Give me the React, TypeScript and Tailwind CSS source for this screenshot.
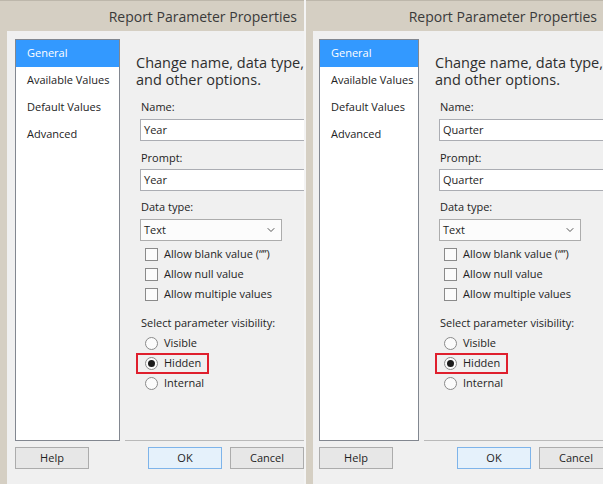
import { ChevronDown } from 'lucide-react';

type DialogProps = {
  value: string;
  width: string;
  listMargin: string;
  listWidth: string;
  okMargin: string;
  titlePad: string;
};

const NAV = ['General', 'Available Values', 'Default Values', 'Advanced'];

function Checkbox({ label }: { label: string }) {
  return (
    <div className="flex h-[20px] items-center pl-[20px]">
      <span className="h-[13px] w-[13px] shrink-0 border border-[#8a8a8a] bg-[#fbfbfb]" />
      <span className="ml-[6px]">{label}</span>
    </div>
  );
}

function Radio({ label, checked, marked }: { label: string; checked?: boolean; marked?: boolean }) {
  return (
    <div className="relative flex h-[20px] items-center pl-[20px]">
      {marked && <div className="absolute left-[11px] top-0 h-[21px] w-[73px] border-2 border-[#df1f2d]" />}
      <span className="flex h-[13px] w-[13px] shrink-0 items-center justify-center rounded-full border border-[#8a8a8a] bg-[#fbfbfb]">
        {checked && <span className="h-[7px] w-[7px] rounded-full bg-[#1a1a1a]" />}
      </span>
      <span className="ml-[6px]">{label}</span>
    </div>
  );
}

function TextBox({ value }: { value: string }) {
  return (
    <div className="ml-[15px] flex h-[22px] items-center border border-r-0 border-[#abadb3] bg-white pl-[3px]">
      {value}
    </div>
  );
}

function Dialog({ value, width, listMargin, listWidth, okMargin, titlePad }: DialogProps) {
  return (
    <div className={`flex h-[484px] flex-col bg-[#d5cfc3] ${width}`}>
      <div className={`flex h-[31px] items-center justify-end border-t border-[#bdb7ab] text-[14px] text-[#3a3a3a] ${titlePad}`}>
        Report Parameter Properties
      </div>
      <div className="ml-[7px] flex flex-1 flex-col bg-[#f0f0f0] pt-[8px]">
        <div className="flex h-[402px]">
          <div className={`flex shrink-0 flex-col border border-[#828790] bg-white ${listMargin} ${listWidth}`}>
            {NAV.map((item, i) => (
              <div
                key={item}
                className={`flex h-[27px] items-center pl-[11px] ${i === 0 ? 'bg-[#3399ff] text-white' : 'text-[#222]'}`}
              >
                {item}
              </div>
            ))}
          </div>
          <div className="ml-[5px] flex min-w-0 flex-1 flex-col border-b border-[#b9b9b9]">
            <div className="ml-[11px] mt-[15px] flex flex-col text-[14.5px] leading-[17px] text-[#2e2e2e]">
              <div className="h-[17px]">Change name, data type,</div>
              <div className="h-[17px]">and other options.</div>
            </div>
            <div className="ml-[16px] mt-[11px] leading-[16px]">Name:</div>
            <div className="mt-[4px]">
              <TextBox value={value} />
            </div>
            <div className="ml-[16px] mt-[9px] leading-[16px]">Prompt:</div>
            <div className="mt-[3px]">
              <TextBox value={value} />
            </div>
            <div className="ml-[16px] mt-[8px] leading-[16px]">Data type:</div>
            <div className="ml-[15px] mt-[4px] flex h-[22px] w-[142px] items-center justify-between border border-[#acacac] bg-[#fcfcfc] pl-[3px] pr-[4px]">
              <span>Text</span>
              <ChevronDown size={12} strokeWidth={2} className="text-[#555]" />
            </div>
            <div className="mt-[3px] flex flex-col">
              <Checkbox label={'Allow blank value (“”)'} />
              <Checkbox label="Allow null value" />
              <Checkbox label="Allow multiple values" />
            </div>
            <div className="ml-[16px] mt-[11px] leading-[16px]">Select parameter visibility:</div>
            <div className="mt-[2px] flex flex-col">
              <Radio label="Visible" />
              <Radio label="Hidden" checked marked />
              <Radio label="Internal" />
            </div>
          </div>
        </div>
        <div className="mt-[6px] flex h-[22px]">
          <button className={`h-[22px] w-[74px] shrink-0 border border-[#acacac] bg-[#e7e7e7] ${listMargin}`}>Help</button>
          <button className={`h-[22px] w-[74px] shrink-0 border border-[#7eb4ea] bg-[#e5f1fb] ${okMargin}`}>OK</button>
          <button className="ml-[8px] h-[22px] w-[74px] shrink-0 border border-[#acacac] bg-[#e7e7e7]">Cancel</button>
        </div>
      </div>
    </div>
  );
}

export default function App() {
  return (
    <div
      className="flex h-[484px] w-[603px] overflow-hidden whitespace-nowrap bg-white text-[11px] text-[#1e1e1e]"
      style={{ fontFamily: '"Open Sans", "Noto Sans", sans-serif' }}
    >
      <Dialog value="Year" width="w-[304px] shrink-0" listMargin="ml-[8px]" listWidth="w-[105px]" okMargin="ml-[59px]" titlePad="pr-[7px]" />
      <div className="w-[2px] shrink-0 bg-[#f4f4f4]" />
      <Dialog value="Quarter" width="flex-1 min-w-0 overflow-hidden" listMargin="ml-[6px]" listWidth="w-[100px]" okMargin="ml-[64px]" titlePad="pr-[6px]" />
    </div>
  );
}
